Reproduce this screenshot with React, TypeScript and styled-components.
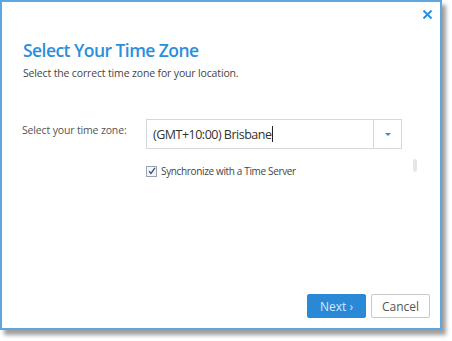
import React from "react";
import styled, { createGlobalStyle } from "styled-components";

const GlobalStyle = createGlobalStyle`
  html, body {
    margin: 0;
    padding: 0;
    background: #ffffff;
  }
  body {
    font-family: "Open Sans", "Noto Sans", sans-serif;
    width: 452px;
    height: 341px;
    overflow: hidden;
  }
`;

const Dialog = styled.div`
  box-sizing: border-box;
  width: 442px;
  height: 330px;
  border: 2px solid #5ea6df;
  background: #ffffff;
  box-shadow: 4px 5px 4px rgba(0, 0, 0, 0.38);
  display: flex;
  flex-direction: column;
`;

const Header = styled.div`
  display: flex;
  justify-content: flex-end;
  padding: 5px 6px 0 0;
  height: 16px;
`;

const CloseButton = styled.button`
  border: 0;
  background: transparent;
  padding: 0;
  width: 14px;
  height: 14px;
  display: flex;
  align-items: center;
  justify-content: center;
  cursor: pointer;
`;

const Intro = styled.div`
  padding: 15px 0 0 21px;
`;

const Title = styled.h1`
  margin: 0;
  font-size: 17.5px;
  font-weight: 600;
  letter-spacing: -0.55px;
  color: #2b8fdc;
  line-height: 24px;
`;

const Subtitle = styled.p`
  margin: 4px 0 0;
  font-size: 10.5px;
  letter-spacing: -0.15px;
  color: #454545;
  line-height: 15px;
`;

const FormRow = styled.div`
  display: flex;
  align-items: center;
  padding: 38px 0 0 20px;
`;

const Label = styled.label`
  width: 124px;
  font-size: 10.5px;
  letter-spacing: -0.15px;
  color: #555555;
  margin-top: -9px;
`;

const SelectBox = styled.div`
  box-sizing: border-box;
  width: 256px;
  height: 30px;
  border: 1px solid #d3d8df;
  display: flex;
`;

const SelectValue = styled.div`
  flex: 1;
  display: flex;
  align-items: center;
  padding-left: 6px;
  font-size: 12.5px;
  letter-spacing: -0.5px;
  color: #333333;
`;

const Caret = styled.span`
  display: inline-block;
  width: 1px;
  height: 16px;
  background: #222;
  margin-left: 1px;
`;

const ToggleButton = styled.div`
  width: 27px;
  border-left: 1px solid #d3d8df;
  display: flex;
  align-items: center;
  justify-content: center;
`;

const Arrow = styled.span`
  width: 0;
  height: 0;
  border-left: 3px solid transparent;
  border-right: 3px solid transparent;
  border-top: 3px solid #2b8fdc;
`;

const CheckRow = styled.div`
  display: flex;
  align-items: center;
  padding: 15px 0 0 144px;
  position: relative;
`;

const Checkbox = styled.span`
  box-sizing: border-box;
  width: 11px;
  height: 11px;
  border: 1px solid #9aa3ad;
  background: #f4f6f8;
  display: flex;
  align-items: center;
  justify-content: center;
  margin-right: 4px;
`;

const CheckText = styled.span`
  font-size: 10px;
  letter-spacing: -0.35px;
  color: #444444;
`;

const ScrollThumb = styled.span`
  position: absolute;
  left: 411px;
  top: 10px;
  width: 4px;
  height: 13px;
  border-radius: 2px;
  background: #e6e6e6;
`;

const Footer = styled.div`
  margin-top: auto;
  display: flex;
  justify-content: flex-end;
  gap: 5px;
  padding: 0 10px 10px 0;
`;

const Button = styled.button<{ $primary?: boolean }>`
  box-sizing: border-box;
  height: 24px;
  width: 59px;
  font-family: "Open Sans", "Noto Sans", sans-serif;
  font-size: 12px;
  border-radius: 2px;
  padding: 0;
  cursor: pointer;
  border: 1px solid ${(p) => (p.$primary ? "#2a89d6" : "#c9c9c9")};
  background: ${(p) => (p.$primary ? "#2a89d6" : "#ffffff")};
  color: ${(p) => (p.$primary ? "#d6e8f8" : "#555555")};
`;

export default function App() {
  return (
    <>
      <GlobalStyle />
      <Dialog>
        <Header>
          <CloseButton aria-label="Close">
            <svg width="9" height="9" viewBox="0 0 9 9">
              <path
                d="M1.2 1.2 L7.8 7.8 M7.8 1.2 L1.2 7.8"
                stroke="#2b8fdc"
                strokeWidth="2"
                strokeLinecap="square"
              />
            </svg>
          </CloseButton>
        </Header>
        <Intro>
          <Title>Select Your Time Zone</Title>
          <Subtitle>Select the correct time zone for your location.</Subtitle>
        </Intro>
        <FormRow>
          <Label>Select your time zone:</Label>
          <SelectBox>
            <SelectValue>
              (GMT+10:00) Brisbane
              <Caret />
            </SelectValue>
            <ToggleButton>
              <Arrow />
            </ToggleButton>
          </SelectBox>
        </FormRow>
        <CheckRow>
          <Checkbox>
            <svg width="8" height="8" viewBox="0 0 8 8">
              <path
                d="M1 4.2 L3 6.4 L7 0.8"
                stroke="#3a4a8c"
                strokeWidth="1.3"
                fill="none"
              />
            </svg>
          </Checkbox>
          <CheckText>Synchronize with a Time Server</CheckText>
          <ScrollThumb />
        </CheckRow>
        <Footer>
          <Button $primary>Next ›</Button>
          <Button>Cancel</Button>
        </Footer>
      </Dialog>
    </>
  );
}
